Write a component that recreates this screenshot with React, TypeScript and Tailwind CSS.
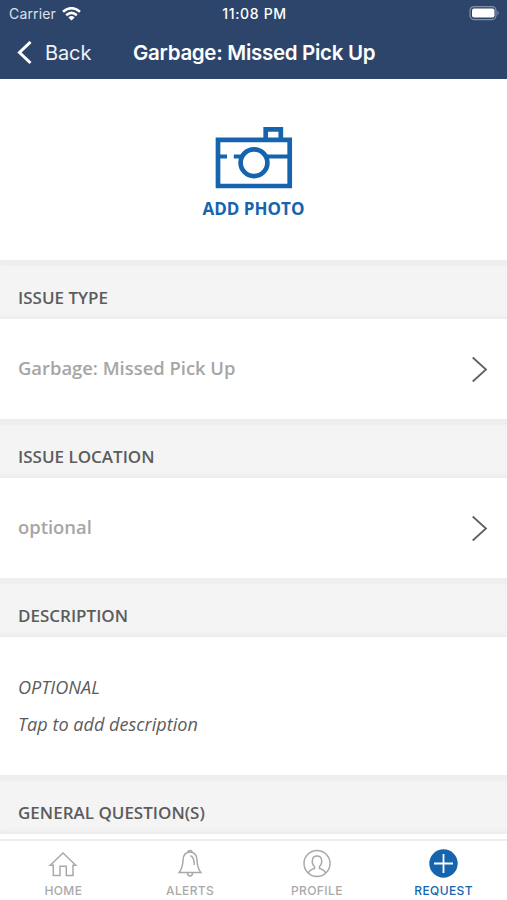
import type { ReactNode } from "react";

function SectionHeader({ title }: { title: string }) {
    return (
        <div className="h-[59px] shrink-0 pl-[18px] pt-[26px] bg-[#f4f4f4] shadow-[inset_0_8px_2px_-2px_#eeeeee,inset_0_-5px_4px_-2px_#ececec]">
            <h2 className="text-[17px] leading-6 font-semibold text-[#5c5c5c]">{title}</h2>
        </div>
    );
}

function SelectRow({ value }: { value: string }) {
    return (
        <button className="h-[100px] w-full shrink-0 flex items-center justify-between pl-[18px] pr-[19px] bg-white">
            <span className="text-[18.4px] leading-6 font-semibold text-[#a6a6a6] pb-[3px]">{value}</span>
            <svg width="18" height="28" viewBox="0 0 18 28" fill="none" stroke="#606060" strokeWidth="1.8">
                <path d="M2.7 2.5 L16 14.5 L2.7 26.5" />
            </svg>
        </button>
    );
}

function Tab({ label, active, children }: { label: string; active?: boolean; children: ReactNode }) {
    return (
        <button
            className={
                active
                    ? "flex-1 flex flex-col items-center pt-2 text-[#1764ae]"
                    : "flex-1 flex flex-col items-center pt-2 text-[#a9a9a9]"
            }
        >
            <svg width="30" height="30" viewBox="0 0 30 30" fill="none" stroke="currentColor" strokeWidth="1.5">
                {children}
            </svg>
            <span className="font-[Inter,sans-serif] text-[12px] leading-4 font-medium tracking-[0.4px] mt-1">
                {label}
            </span>
        </button>
    );
}

export default function App() {
    return (
        <div className="w-[507px] h-[900px] flex flex-col overflow-hidden bg-white font-['Open_Sans',sans-serif]">
            <header className="h-[79px] shrink-0 bg-[#2e456b] text-white font-[Inter,sans-serif]">
                {/* Status bar */}
                <div className="h-[27px] grid grid-cols-3 items-center pl-[9px] pr-[7px] text-[14px] leading-5">
                    <div className="flex items-center gap-[6px] text-[#dce2eb]">
                        <span className="tracking-[0.15px]">Carrier</span>
                        <svg width="19" height="14" viewBox="0 0 19 14" fill="none" stroke="#fff" strokeWidth="2.5">
                            <path d="M1 4.8 Q9.5 -2.5 18 4.8" />
                            <path d="M4.2 8.2 Q9.5 3.6 14.8 8.2" />
                            <path d="M6.4 10.4 Q9.5 7.8 12.6 10.4 L9.5 13.4Z" fill="#fff" stroke="none" />
                        </svg>
                    </div>
                    <span className="text-center font-medium tracking-[0.65px]">11:08 PM</span>
                    <svg width="31" height="15" viewBox="0 0 31 15" className="justify-self-end">
                        <rect x="1" y="0.6" width="26" height="13" rx="4" fill="none" stroke="#8391a8" strokeWidth="1.2" />
                        <rect x="3" y="2.6" width="22.5" height="9" rx="2" fill="#fff" />
                        <path d="M28.5 4.6 Q31 7.1 28.5 9.6Z" fill="#8391a8" />
                    </svg>
                </div>
                {/* Navigation bar */}
                <div className="h-[51px] flex items-center pl-[17px]">
                    <button className="flex items-center w-[116px] gap-[13px] text-[20px] text-[#eef2f7]">
                        <svg width="15" height="24" viewBox="0 0 15 24" fill="none" stroke="#fff" strokeWidth="3">
                            <path d="M13.5 1 L2.5 11.5 L13.5 22" />
                        </svg>
                        <span className="tracking-[-0.1px]">Back</span>
                    </button>
                    <h1 className="text-[20.5px] font-semibold tracking-[-0.3px] whitespace-nowrap pt-0.5">Garbage: Missed Pick Up</h1>
                </div>
            </header>

            <button className="h-[181px] shrink-0 flex flex-col items-center pt-[47px] bg-white text-[#1764ae]">
                <svg width="78" height="64" viewBox="0 0 78 64" fill="none" stroke="currentColor" strokeWidth="4.7">
                    <path d="M3 13.8 H74.7 V60 H3Z" />
                    <path d="M50.7 13 V3.4 H65.8 V13" />
                    <path d="M3 30.5 H12 M18.8 30.5 H26 M52 30.5 H74" strokeWidth="4" />
                    <circle cx="39" cy="36.7" r="13.4" />
                </svg>
                <span className="text-[17px] leading-6 font-bold mt-[7px]">ADD PHOTO</span>
            </button>

            <SectionHeader title="ISSUE TYPE" />
            <SelectRow value="Garbage: Missed Pick Up" />
            <SectionHeader title="ISSUE LOCATION" />
            <SelectRow value="optional" />
            <SectionHeader title="DESCRIPTION" />
            <div className="h-[138px] shrink-0 pl-[18px] pt-[38px] italic text-[#5c5c5c] bg-white">
                <p className="text-[18.1px] leading-6">OPTIONAL</p>
                <p className="text-[18.1px] leading-6 mt-[13px]">Tap to add description</p>
            </div>
            <SectionHeader title="GENERAL QUESTION(S)" />

            <nav className="h-[61px] shrink-0 mt-[5px] flex border-t-2 border-[#eeeeee] bg-white">
                <Tab label="HOME">
                    <path d="M2.3 16.2 L15 4 L27.7 16.2 H25 V26.4 H18.3 V17.2 H12 V26.4 H5.3 V16.2Z" />
                </Tab>
                <Tab label="ALERTS">
                    <path d="M15 3 C10 3.2 8.2 6.8 8 11 C7.8 17 7.2 19.5 4.2 23.4 H25.8 C22.8 19.5 22.2 17 22 11 C21.8 6.8 20 3.2 15 3Z" />
                    <path d="M13 3.2 Q13 1.6 15 1.6 Q17 1.6 17 3.2 M12.5 23.7 Q12.5 27 15 27 Q17.5 27 17.5 23.7 M15.3 6.8 Q19.3 7.8 19.2 16" />
                </Tab>
                <Tab label="PROFILE">
                    <circle cx="15" cy="14.5" r="13" />
                    <path d="M6.5 24 C7 21.3 9.2 20.5 12.5 19.5 V17.5 C9.8 15 10.1 12.5 10.5 10.3 C11.2 6 18.8 6 19.5 10.3 C19.9 12.5 20.2 15 17.5 17.5 V19.5 C20.8 20.5 23 21.3 23.5 24" />
                </Tab>
                <Tab label="REQUEST" active>
                    <circle cx="14.5" cy="14.5" r="14.2" fill="currentColor" stroke="none" />
                    <path d="M14.5 5 V24 M5 14.5 H24" stroke="#fff" strokeWidth="1.8" />
                </Tab>
            </nav>
        </div>
    );
}
